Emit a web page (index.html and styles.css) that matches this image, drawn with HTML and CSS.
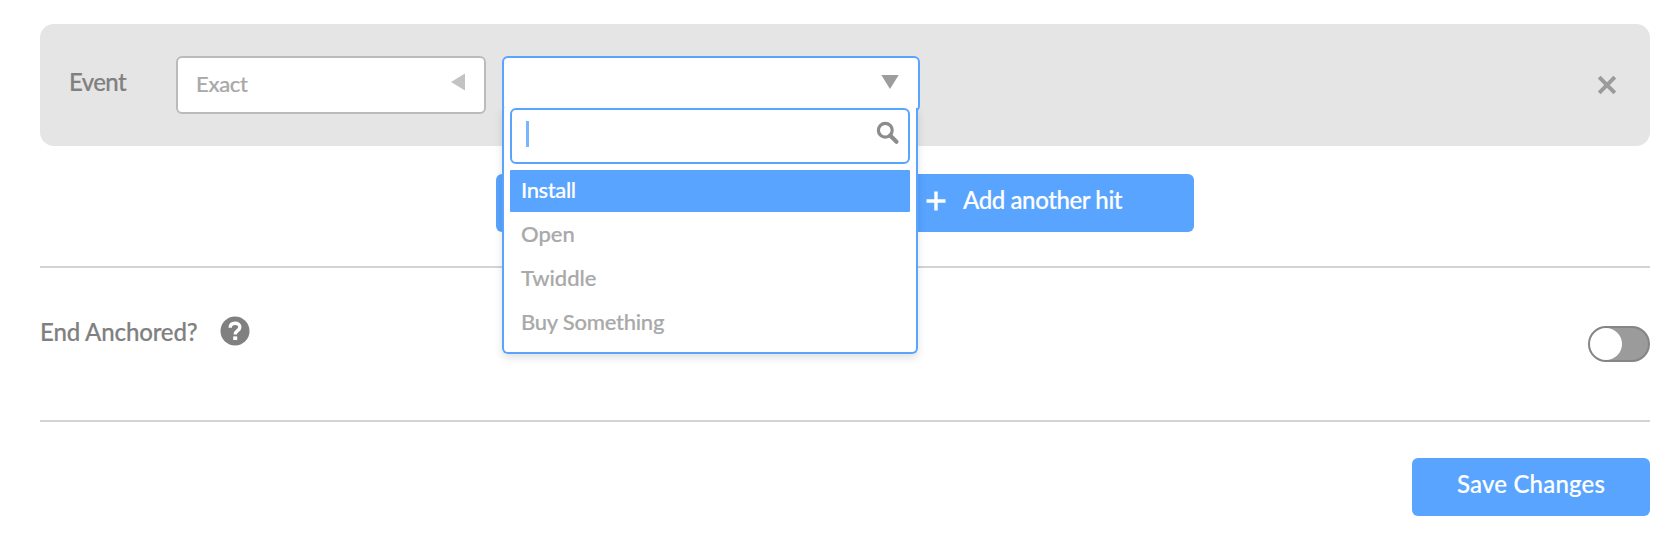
FILE: index.html
```html
<!DOCTYPE html>
<html lang="en">
<head>
<meta charset="utf-8">
<title>Edit event</title>
<link rel="stylesheet" href="styles.css">
</head>
<body>
<main class="page">
  <section class="hit">
    <label class="hit-label">Event</label>
    <div class="select match">
      <span class="match-text">Exact</span>
      <svg class="arrow-left" width="14" height="18" viewBox="0 0 14 18"><path d="M14 .5v17L0 9z" fill="#c3c3c3"/></svg>
    </div>
    <div class="select event-select">
      <svg class="arrow-down" width="18" height="14" viewBox="0 0 18 14"><path d="M.3 0h17.4L9 14z" fill="#9d9d9d"/></svg>
      <div class="dropdown">
        <div class="search">
          <span class="caret"></span>
          <svg class="search-icon" width="24" height="24" viewBox="0 0 24 24" fill="none" stroke="#8c8c8c"><circle cx="9.3" cy="9.2" r="6.9" stroke-width="3.2"/><path d="M14.2 14.5l6.3 6.2" stroke-width="4.2" stroke-linecap="round"/></svg>
        </div>
        <ul class="options">
          <li class="option active"><span class="t-install">Install</span></li>
          <li class="option"><span class="t-open">Open</span></li>
          <li class="option"><span class="t-twiddle">Twiddle</span></li>
          <li class="option"><span class="t-buy">Buy Something</span></li>
        </ul>
      </div>
    </div>
    <svg class="remove" width="20" height="20" viewBox="0 0 20 20"><path d="M2.200 2.200l15.600 15.600M17.800 2.200L2.200 17.800" stroke="#9b9b9b" stroke-width="4"/></svg>
  </section>

  <button class="button add">
    <svg width="20" height="20" viewBox="0 0 20 20"><path d="M10 .5v19M.5 10h19" stroke="#fff" stroke-width="3.400"/></svg>
    <span class="add-text">Add another hit</span>
  </button>

  <section class="anchored">
    <span class="anchored-label">End Anchored?</span>
    <svg class="help" width="30" height="30" viewBox="0 0 30 30"><circle cx="15" cy="15" r="14.5" fill="#808080"/><path d="M10.2 11.7C10.2 8.8 12 7.2 15 7.2c2.9 0 4.8 1.6 4.8 4 0 3.500-4.600 3.500-4.600 7.300" fill="none" stroke="#fff" stroke-width="3.400"/><path d="M13.200 20.400h4v3.600h-4z" fill="#fff"/></svg>
    <span class="toggle"><span class="knob"></span></span>
  </section>

  <footer class="actions">
    <button class="button save"><span class="save-text">Save Changes</span></button>
  </footer>
</main>
</body>
</html>
```
FILE: styles.css
```css
* { box-sizing: border-box; }

body {
  margin: 0;
  background: #fff;
  color: #808080;
  font: 500 24px/30px Lato, "Open Sans", sans-serif;
  -webkit-text-stroke: .2px currentColor;
}

.page {
  display: flex;
  flex-direction: column;
  padding: 24px 24px 0 40px;
}

svg { display: block; flex: none; }

.hit {
  display: flex;
  align-items: flex-start;
  height: 122px;
  padding: 32px 33px 0 28px;
  border-radius: 14px;
  background: #e5e5e5;
}

.hit-label {
  width: 108px;
  padding: 11px 0 0 1px;
  letter-spacing: -.6px;
}

.select {
  position: relative;
  display: flex;
  height: 58px;
  border: 2px solid #bbb;
  border-radius: 6px;
  background: #fff;
}

.match {
  justify-content: space-between;
  width: 310px;
  padding: 11px 19px 0 18px;
  color: #a9a9a9;
  font-size: 22px;
  letter-spacing: -.3px;
}

.arrow-left { margin-top: 4px; }

.event-select {
  justify-content: flex-end;
  width: 418px;
  height: 56px;
  margin-left: 16px;
  padding: 17px 19px 0 0;
  border-color: #58a4ff;
}

.dropdown {
  position: absolute;
  top: 50px;
  left: -2px;
  z-index: 2;
  width: 416px;
  height: 246px;
  padding: 0 6px;
  border: 2px solid #58a4ff;
  border-top: 0;
  border-radius: 0 0 6px 6px;
  background: #fff;
  box-shadow: 0 4px 8px rgba(0, 0, 0, .12);
}

.search {
  display: flex;
  justify-content: space-between;
  height: 56px;
  padding: 11px 8px 0 14px;
  border: 2px solid #58a4ff;
  border-radius: 6px;
}

.caret { width: 3px; height: 26px; background: #79b6ff; }

.options {
  display: grid;
  gap: 2px;
  margin: 6px 0 0;
  padding: 0;
  list-style: none;
}

.option {
  height: 42px;
  padding: 5px 11px;
  border-radius: 1px;
  color: #a9a9a9;
  font-size: 22px;
}

.option.active { background: #58a4ff; color: #fff; }

.t-install { letter-spacing: -.4px; }
.t-buy { letter-spacing: -.25px; }

.remove { margin: 19px 0 0 auto; }

.button {
  display: flex;
  height: 58px;
  border: 0;
  border-radius: 6px;
  background: #58a4ff;
  color: #fff;
  font: inherit;
}

.add {
  gap: 17px;
  width: 698px;
  margin: 28px 0 0 456px;
  padding: 11px 0 0 430px;
}

.add svg { margin-top: 6px; }

.add-text { letter-spacing: -.4px; }

.anchored {
  display: flex;
  height: 156px;
  margin-top: 34px;
  padding-top: 48px;
  border-top: 2px solid #d4d4d4;
  border-bottom: 2px solid #d4d4d4;
}

.anchored-label { width: 180px; padding-top: 1px; letter-spacing: -.15px; }

.toggle {
  width: 62px;
  height: 36px;
  margin: 10px 0 0 auto;
  border: 2px solid #858585;
  border-radius: 18px;
  background: #9b9b9b;
}

.knob {
  display: block;
  width: 32px;
  height: 32px;
  border-radius: 50%;
  background: #fff;
}

.actions {
  display: flex;
  justify-content: flex-end;
  margin-top: 36px;
}

.save {
  justify-content: center;
  width: 238px;
  padding: 11px 0 0;
  letter-spacing: .2px;
}
```
